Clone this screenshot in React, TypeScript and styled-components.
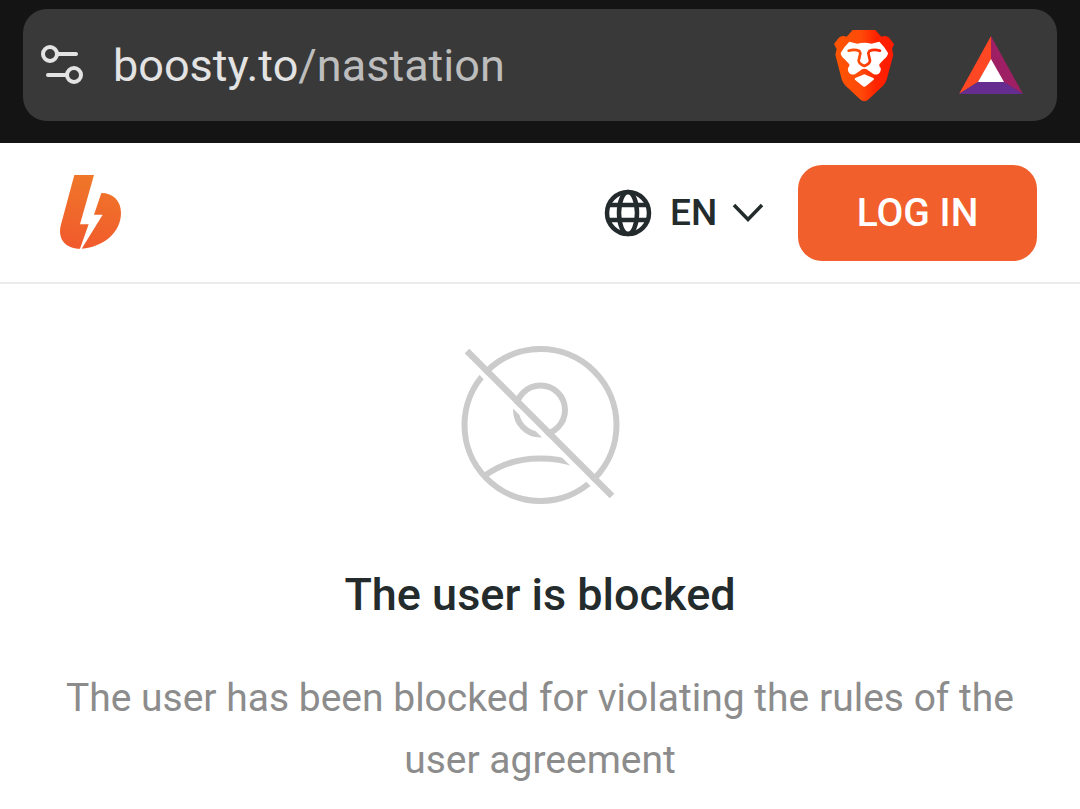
import React from "react";
import styled, { createGlobalStyle } from "styled-components";

const GlobalStyle = createGlobalStyle`
  *, *::before, *::after { box-sizing: border-box; }
  body {
    margin: 0;
    background: #ffffff;
    font-family: Roboto, "Noto Sans", sans-serif;
    color: #242b2c;
  }
  button, select { font: inherit; }
  svg { display: block; }
`;

const BrowserBar = styled.div`
  padding: 9px 23px 22px;
  background: #141414;
`;

const AddressPill = styled.div`
  display: flex;
  align-items: center;
  height: 112px;
  padding: 0 34px 0 16px;
  border-radius: 24px;
  background: #393939;
`;

const PlainButton = styled.button`
  flex: none;
  padding: 0;
  border: 0;
  background: none;
  cursor: pointer;
`;

const Address = styled.button`
  flex: 1;
  min-width: 0;
  padding: 2px 0 0 28px;
  border: 0;
  background: none;
  color: #e3e3e3;
  font-size: 45px;
  line-height: 56px;
  text-align: left;
  white-space: nowrap;
  overflow: hidden;
  cursor: text;
`;

const AddressPath = styled.span`
  color: #bdbdbd;
`;

const BarActions = styled.div`
  display: flex;
  align-items: center;
  gap: 59px;
`;

const SiteHeader = styled.header`
  display: flex;
  align-items: center;
  justify-content: space-between;
  padding: 22px 43px 21px 56px;
  border-bottom: 2px solid #ebebeb;
`;

const HomeLink = styled.a`
  display: block;
`;

const HeaderActions = styled.div`
  display: flex;
  align-items: center;
  gap: 34px;
`;

const LanguagePicker = styled.label`
  display: flex;
  align-items: center;
  gap: 18px;
`;

const SelectBox = styled.span`
  display: grid;
  align-items: center;
  justify-items: end;

  > * { grid-area: 1 / 1; }
  > svg { pointer-events: none; }
`;

const LanguageSelect = styled.select`
  appearance: none;
  padding: 0 46px 0 0;
  border: 0;
  background: none;
  color: #242b2c;
  font-size: 37px;
  font-weight: 500;
  line-height: 48px;
  cursor: pointer;
`;

const LoginButton = styled.button`
  min-width: 239px;
  height: 96px;
  padding: 0 24px;
  border: 0;
  border-radius: 24px;
  background: #f15f2c;
  color: #ffffff;
  font-size: 39px;
  font-weight: 500;
  line-height: 48px;
  cursor: pointer;
`;

const Notice = styled.main`
  display: flex;
  flex-direction: column;
  align-items: center;
  padding: 46px 48px 16px;
  text-align: center;
`;

const NoticeTitle = styled.h1`
  margin: 47px 0 0;
  font-size: 45px;
  font-weight: 500;
  line-height: 56px;
`;

const NoticeText = styled.p`
  margin: 44px 0 0;
  color: #8c8c8c;
  font-size: 39px;
  line-height: 62px;
`;

const TuneIcon = () => (
  <svg width="46" height="44" viewBox="0 0 46 44" fill="none" stroke="#e3e3e3" strokeWidth="4" strokeLinecap="round" aria-hidden="true">
    <circle cx="11" cy="11" r="7" />
    <path d="M19 11H37" />
    <circle cx="35" cy="32" r="7" />
    <path d="M9 32H27" />
  </svg>
);

const BraveIcon = () => (
  <svg width="72" height="74" viewBox="24 38 216 222" aria-hidden="true">
    <defs>
      <linearGradient id="brave" gradientUnits="userSpaceOnUse" x1="42" x2="222" y1="0" y2="0">
        <stop offset="0" stopColor="#ff5500" />
        <stop offset="0.45" stopColor="#ff4a0a" />
        <stop offset="0.7" stopColor="#ff2400" />
        <stop offset="1" stopColor="#ff1a00" />
      </linearGradient>
    </defs>
    <path
      fill="url(#brave)"
      d="M98 44H166L184 64C194 60 202 62 208 68L222 86L216 102L220 118L202 186C198 202 192 210 182 218L146 252Q133 264 120 252L84 218C74 210 68 202 64 188L46 118L50 102L42 86L56 68C62 62 70 60 80 64Z"
    />
    <path
      fill="#ffffff"
      d="M88 79L112 85Q133 80 154 85L178 79Q192 92 204 113Q204 122 192 132L178 147Q176 152 182 158Q184 168 176 175Q168 180 160 176L140 162Q133 158 126 162L106 176Q98 180 90 175Q82 168 84 158Q90 152 88 147L74 132Q62 122 62 113Q74 92 88 79Z"
    />
    <path
      fill="none"
      stroke="url(#brave)"
      strokeWidth="8"
      strokeLinecap="round"
      strokeLinejoin="round"
      d="M86 106Q104 101 118 107L121 114L116 136Q117 146 133 152Q149 146 150 136L145 114L148 107Q162 101 180 106"
    />
    <path fill="#ffffff" d="M133 177L160 188Q163 190 161 193L138 212Q133 216 128 212L105 193Q103 190 106 188Z" />
  </svg>
);

const TokenIcon = () => (
  <svg width="64" height="58" viewBox="0 0 64 58" aria-hidden="true">
    <path fill="#ff4724" d="M32 0V24L19 46L0 58Z" />
    <path fill="#9e1f63" d="M32 0L64 58L44 46L32 24Z" />
    <path fill="#662d91" d="M0 58L19 46H45L64 58Z" />
    <path fill="#ffffff" d="M32 23L45 46H19Z" />
  </svg>
);

const BoostyLogo = () => (
  <svg width="70" height="76" viewBox="33 44 210 228" role="img" aria-label="Boosty">
    <defs>
      <linearGradient id="boosty" gradientUnits="userSpaceOnUse" x1="150" y1="43" x2="110" y2="264">
        <stop offset="0" stopColor="#ef7829" />
        <stop offset="1" stopColor="#f15a2c" />
      </linearGradient>
    </defs>
    <g fill="url(#boosty)">
      <path d="M88 44H147L105 192H131L105 265C62 265 38 236 47 196Z" />
      <path d="M169 98C205 98 228 122 228 158C228 216 176 260 110 265L173 163H147Z" />
    </g>
  </svg>
);

const GlobeIcon = () => (
  <svg width="48" height="48" viewBox="0 0 48 48" fill="none" stroke="#242b2c" strokeWidth="4.5" aria-hidden="true">
    <circle cx="24" cy="24" r="21" />
    <ellipse cx="24" cy="24" rx="9" ry="21" />
    <path d="M5 16H43M5 31H43" />
  </svg>
);

const ChevronIcon = () => (
  <svg width="32" height="20" viewBox="0 0 32 20" fill="none" stroke="#242b2c" strokeWidth="3.5" aria-hidden="true">
    <path d="M2 2L16 16.500L30 2" />
  </svg>
);

const BlockedUserIcon = () => (
  <svg width="190" height="190" viewBox="0 0 190 190" fill="none" stroke="#cbcbcb" strokeWidth="6" aria-hidden="true">
    <circle cx="95.500" cy="95" r="76" />
    <circle cx="95.500" cy="80" r="24.500" />
    <path d="M39.500 146C56 133.500 74 128.500 95 128.500C108 128.500 119 130 130 134" />
    <path d="M18 25L163 170" stroke="#ffffff" strokeWidth="5" />
    <path d="M22 21L167 166" strokeWidth="6.500" />
  </svg>
);

export default function App() {
  return (
    <>
      <GlobalStyle />
      <BrowserBar>
        <AddressPill>
          <PlainButton type="button" aria-label="Site settings">
            <TuneIcon />
          </PlainButton>
          <Address type="button">
            boosty.to<AddressPath>/nastation</AddressPath>
          </Address>
          <BarActions>
            <PlainButton type="button" aria-label="Brave Shields">
              <BraveIcon />
            </PlainButton>
            <PlainButton type="button" aria-label="Brave Rewards">
              <TokenIcon />
            </PlainButton>
          </BarActions>
        </AddressPill>
      </BrowserBar>
      <SiteHeader>
        <HomeLink href="/">
          <BoostyLogo />
        </HomeLink>
        <HeaderActions>
          <LanguagePicker>
            <GlobeIcon />
            <SelectBox>
              <LanguageSelect aria-label="Language" defaultValue="en">
                <option value="en">EN</option>
              </LanguageSelect>
              <ChevronIcon />
            </SelectBox>
          </LanguagePicker>
          <LoginButton type="button">LOG IN</LoginButton>
        </HeaderActions>
      </SiteHeader>
      <Notice>
        <BlockedUserIcon />
        <NoticeTitle>The user is blocked</NoticeTitle>
        <NoticeText>
          The user has been blocked for violating the rules of the user agreement
        </NoticeText>
      </Notice>
    </>
  );
}
